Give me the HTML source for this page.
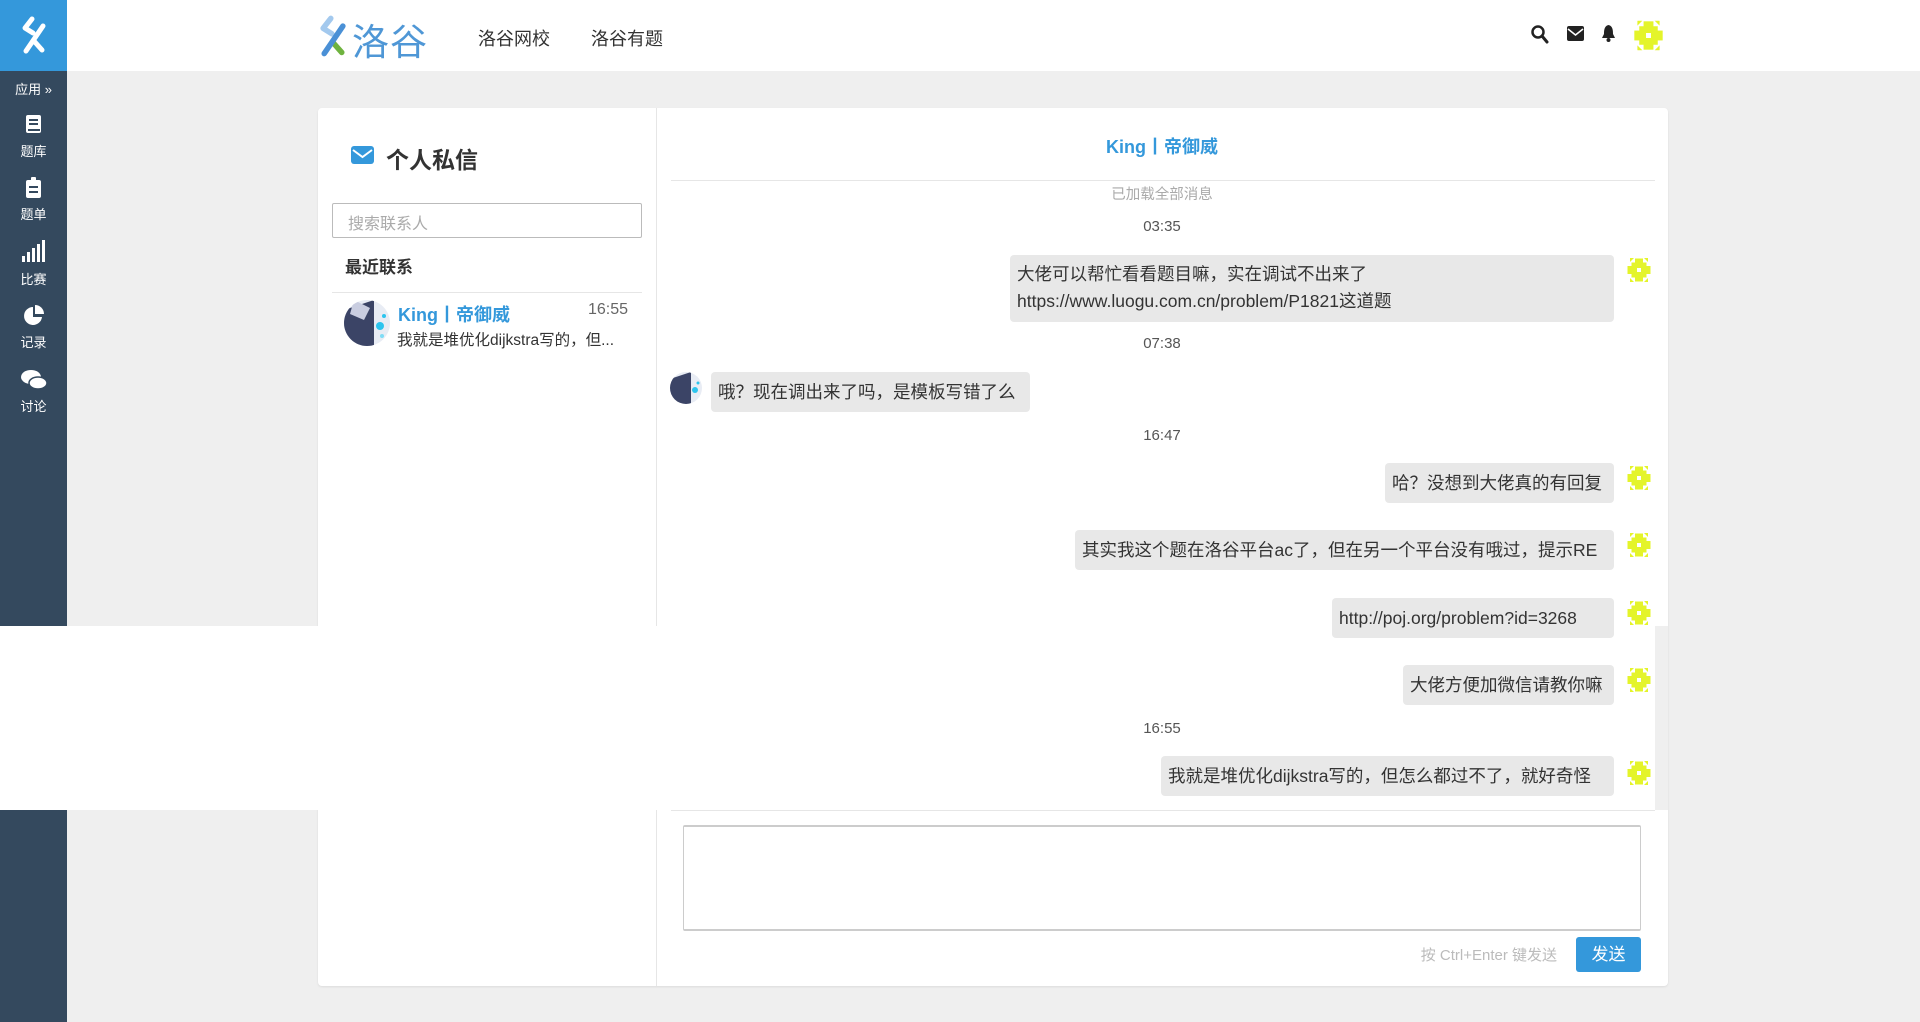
<!DOCTYPE html>
<html><head><meta charset="utf-8"><style>
*{margin:0;padding:0;box-sizing:border-box}
body{width:1920px;height:1022px;background:#efefef;font-family:"Liberation Sans","Noto Sans CJK SC",sans-serif;color:#333;position:relative;overflow:hidden}
.a{position:absolute}
.side{left:0;top:0;width:67px;height:1022px;background:#34495e}
.side .top{left:0;top:0;width:67px;height:71px;background:#3498db}
.si{left:0;width:67px;text-align:center;color:#fff;font-size:13px}
.hdr{left:67px;top:0;width:1853px;height:71px;background:#fff}
.card{left:318px;top:108px;width:1350px;height:878px;background:#fff;border-radius:4px;box-shadow:0 1px 2px rgba(0,0,0,.08)}
.bub{background:#e8e8e8;border-radius:4px;font-size:17.5px;color:#333;padding:0 7px;line-height:40px;white-space:nowrap}
.tm{font-size:15px;color:#555;width:200px;text-align:center;left:1062px}
</style></head><body>
<svg width="0" height="0" style="position:absolute"><defs>
<clipPath id="cc"><circle cx="3" cy="3" r="3"/></clipPath>
<g id="av" clip-path="url(#cc)"><g fill="#e4f42a">
<path fill-rule="evenodd" d="M1.5 1.5H4.5V4.5H1.5Z M2.6 2.6V3.4H3.4V2.6Z"/>
<rect x="2.2" y="0.7" width="1.6" height="0.9"/><rect x="2.2" y="4.4" width="1.6" height="0.9"/>
<rect x="0.7" y="2.2" width="0.9" height="1.6"/><rect x="4.4" y="2.2" width="0.9" height="1.6"/>
<path d="M1.2 0.6L2 0.6L1.2 1.4Z M4.8 0.6L4 0.6L4.8 1.4Z M1.2 5.4L2 5.4L1.2 4.6Z M4.8 5.4L4 5.4L4.8 4.6Z"/>
</g></g></defs></svg>
<div class="a side"><div class="a top"></div>
<svg class="a" style="left:19px;top:15px" width="30" height="40" viewBox="0 0 30 40"><path d="M13 4 L6 13 L14 18 M24 11 L7 36 M15 26 L23 35" stroke="#fff" stroke-width="5" fill="none" stroke-linecap="round" stroke-linejoin="round"/></svg>
<div class="a si" style="top:79px">应用 »</div>
<svg class="a" style="left:25px;top:115px" width="17" height="20"><rect x="1" y="0" width="15" height="18" rx="2" fill="#fff"/><rect x="4" y="4" width="9" height="2" fill="#34495e"/><rect x="4" y="8" width="9" height="2" fill="#34495e"/><rect x="3" y="14" width="12" height="2" fill="#34495e"/></svg>
<div class="a si" style="top:141px">题库</div>
<svg class="a" style="left:26px;top:177px" width="15" height="21"><rect x="0" y="3" width="15" height="18" rx="2" fill="#fff"/><rect x="5" y="0" width="5" height="5" rx="1" fill="#fff"/><rect x="3" y="9" width="9" height="2" fill="#34495e"/><rect x="3" y="14" width="9" height="2" fill="#34495e"/></svg>
<div class="a si" style="top:204px">题单</div>
<svg class="a" style="left:22px;top:240px" width="24" height="22"><rect x="0" y="16" width="3" height="6" fill="#fff"/><rect x="5" y="12" width="3" height="10" fill="#fff"/><rect x="10" y="8" width="3" height="14" fill="#fff"/><rect x="15" y="4" width="3" height="18" fill="#fff"/><rect x="20" y="0" width="3" height="22" fill="#fff"/></svg>
<div class="a si" style="top:269px">比赛</div>
<svg class="a" style="left:23px;top:305px" width="22" height="22"><path d="M10 2 A9 9 0 1 0 19 12 L10 12 Z" fill="#fff"/><path d="M12 0 A9 9 0 0 1 21 9 L12 9Z" fill="#fff"/></svg>
<div class="a si" style="top:332px">记录</div>
<svg class="a" style="left:20px;top:369px" width="28" height="22"><ellipse cx="11" cy="8" rx="10" ry="7" fill="#fff"/><ellipse cx="18" cy="14" rx="9" ry="6" fill="#fff" stroke="#34495e" stroke-width="1.5"/></svg>
<div class="a si" style="top:396px">讨论</div>
</div>
<div class="a hdr"></div>
<svg class="a" style="left:316px;top:14px" width="34" height="44" viewBox="0 0 30 40"><path d="M13 4 L6 13 L14 18" stroke="#a3c9ee" stroke-width="5" fill="none" stroke-linecap="round" stroke-linejoin="round"/><path d="M15 26 L23 35" stroke="#6fb33f" stroke-width="5" stroke-linecap="round"/><path d="M24 11 L7 36" stroke="#4a90d6" stroke-width="5" stroke-linecap="round"/></svg>
<div class="a" style="left:352px;top:12px;font-size:37px;color:#4f97d6;letter-spacing:1px">洛谷</div>
<div class="a" style="left:478px;top:25px;font-size:18px;color:#333">洛谷网校</div>
<div class="a" style="left:591px;top:25px;font-size:18px;color:#333">洛谷有题</div>
<svg class="a" style="left:1531px;top:25px" width="18" height="19"><circle cx="7" cy="7" r="5.5" stroke="#222" stroke-width="2.5" fill="none"/><path d="M11 11 L16 17" stroke="#222" stroke-width="3" stroke-linecap="round"/></svg>
<svg class="a" style="left:1567px;top:26px" width="17" height="15"><rect width="17" height="15" rx="2" fill="#222"/><path d="M1 3 L8.5 9 L16 3" stroke="#fff" stroke-width="1.6" fill="none"/></svg>
<svg class="a" style="left:1601px;top:24px" width="15" height="19"><path d="M7.5 1 C3 2 3 7 3 10 L1 14 L14 14 L12 10 C12 7 12 2 7.5 1Z" fill="#222"/><circle cx="7.5" cy="16" r="2" fill="#222"/></svg>
<svg class="a" style="left:1630px;top:17px" width="37" height="37" viewBox="0 0 6 6"><use href="#av"/></svg>

<div class="a card"></div>
<div class="a" style="left:656px;top:108px;width:1px;height:878px;background:#e6e6e6"></div>
<svg class="a" style="left:351px;top:146px" width="23" height="18"><rect width="23" height="18" rx="3" fill="#3498db"/><path d="M2 4 L11.5 11 L21 4" stroke="#fff" stroke-width="2" fill="none"/></svg>
<div class="a" style="left:386px;top:141px;font-size:23px;font-weight:bold;color:#333">个人私信</div>
<div class="a" style="left:332px;top:203px;width:310px;height:35px;border:1px solid #bbb;border-radius:2px;font-size:16px;color:#aaa;padding:6px 15px">搜索联系人</div>
<div class="a" style="left:345px;top:253px;font-size:17px;font-weight:bold;color:#333">最近联系</div>
<div class="a" style="left:332px;top:292px;width:310px;height:1px;background:#e6e6e6"></div>
<svg class="a" style="left:344px;top:300px" width="46" height="46"><defs><clipPath id="c1"><circle cx="23" cy="23" r="23"/></clipPath></defs><g clip-path="url(#c1)"><rect width="46" height="46" fill="#e8ecf4"/><path d="M0 10 L30 0 L30 46 L0 46Z" fill="#3b4466"/><path d="M10 0 L26 8 L20 20 L6 14Z" fill="#c9cde0"/><circle cx="36" cy="26" r="4" fill="#2cc4ee"/><circle cx="40" cy="16" r="2" fill="#2cc4ee"/><circle cx="38" cy="36" r="2" fill="#7fdcf5"/></g></svg>
<div class="a" style="left:398px;top:301px;font-size:18px;font-weight:bold;color:#3498db">King丨帝御威</div>
<div class="a" style="left:588px;top:301px;font-size:16px;color:#666">16:55</div>
<div class="a" style="left:397px;top:328px;font-size:15.5px;color:#333">我就是堆优化dijkstra写的，但...</div>

<div class="a" style="left:1062px;top:133px;width:200px;text-align:center;font-size:18px;font-weight:bold;color:#3498db">King丨帝御威</div>
<div class="a" style="left:671px;top:180px;width:984px;height:1px;background:#e6e6e6"></div>

<div class="a" style="left:0;top:626px;width:1655px;height:184px;background:#fff;z-index:2"></div>
<div class="a" style="left:1655px;top:626px;width:13px;height:184px;background:#efefef;z-index:2"></div>

<div style="position:absolute;left:0;top:0;z-index:3">
<div class="a tm" style="top:183px;color:#aaa;font-size:14.5px">已加载全部消息</div>
<div class="a tm" style="top:218px">03:35</div>
<div class="a bub" style="left:1010px;top:255px;width:604px;height:67px;line-height:27px;padding-top:6px">大佬可以帮忙看看题目嘛，实在调试不出来了<br>https://www.luogu.com.cn/problem/P1821这道题</div>
<div class="a tm" style="top:335px">07:38</div>
<svg class="a" style="left:670px;top:372px" width="32" height="32"><defs><clipPath id="c2"><circle cx="16" cy="16" r="16"/></clipPath></defs><g clip-path="url(#c2)"><rect width="32" height="32" fill="#e8ecf4"/><path d="M0 7 L21 0 L21 32 L0 32Z" fill="#3b4466"/><circle cx="25" cy="18" r="3" fill="#2cc4ee"/><circle cx="28" cy="11" r="1.5" fill="#2cc4ee"/></g></svg>
<div class="a bub" style="left:711px;top:372px;width:319px">哦？现在调出来了吗，是模板写错了么</div>
<div class="a tm" style="top:427px">16:47</div>
<div class="a bub" style="left:1385px;top:463px;width:229px">哈？没想到大佬真的有回复</div>
<div class="a bub" style="left:1075px;top:530px;width:539px">其实我这个题在洛谷平台ac了，但在另一个平台没有哦过，提示RE</div>
<div class="a bub" style="left:1332px;top:598px;width:282px">http://poj.org/problem?id=3268</div>
<div class="a bub" style="left:1403px;top:665px;width:211px">大佬方便加微信请教你嘛</div>
<div class="a tm" style="top:720px">16:55</div>
<div class="a bub" style="left:1161px;top:756px;width:453px">我就是堆优化dijkstra写的，但怎么都过不了，就好奇怪</div>
<svg class="a" style="left:1624px;top:255px" width="30" height="30" viewBox="0 0 6 6"><use href="#av"/></svg>
<svg class="a" style="left:1624px;top:463px" width="30" height="30" viewBox="0 0 6 6"><use href="#av"/></svg>
<svg class="a" style="left:1624px;top:530px" width="30" height="30" viewBox="0 0 6 6"><use href="#av"/></svg>
<svg class="a" style="left:1624px;top:598px" width="30" height="30" viewBox="0 0 6 6"><use href="#av"/></svg>
<svg class="a" style="left:1624px;top:665px" width="30" height="30" viewBox="0 0 6 6"><use href="#av"/></svg>
<svg class="a" style="left:1624px;top:758px" width="30" height="30" viewBox="0 0 6 6"><use href="#av"/></svg>
</div>

<div class="a" style="left:671px;top:810px;width:984px;height:1px;background:#e6e6e6"></div>
<div class="a" style="left:683px;top:825px;width:958px;height:106px;border:1px solid #ccc;border-top:2px solid #ccc;border-bottom:2px solid #ccc;border-radius:2px"></div>
<div class="a" style="left:1380px;top:944px;width:177px;text-align:right;font-size:15px;color:#bbb">按 Ctrl+Enter 键发送</div>
<div class="a" style="left:1576px;top:937px;width:65px;height:35px;background:#3498db;border-radius:3px;color:#fff;font-size:17px;text-align:center;line-height:35px">发送</div>
</body></html>
